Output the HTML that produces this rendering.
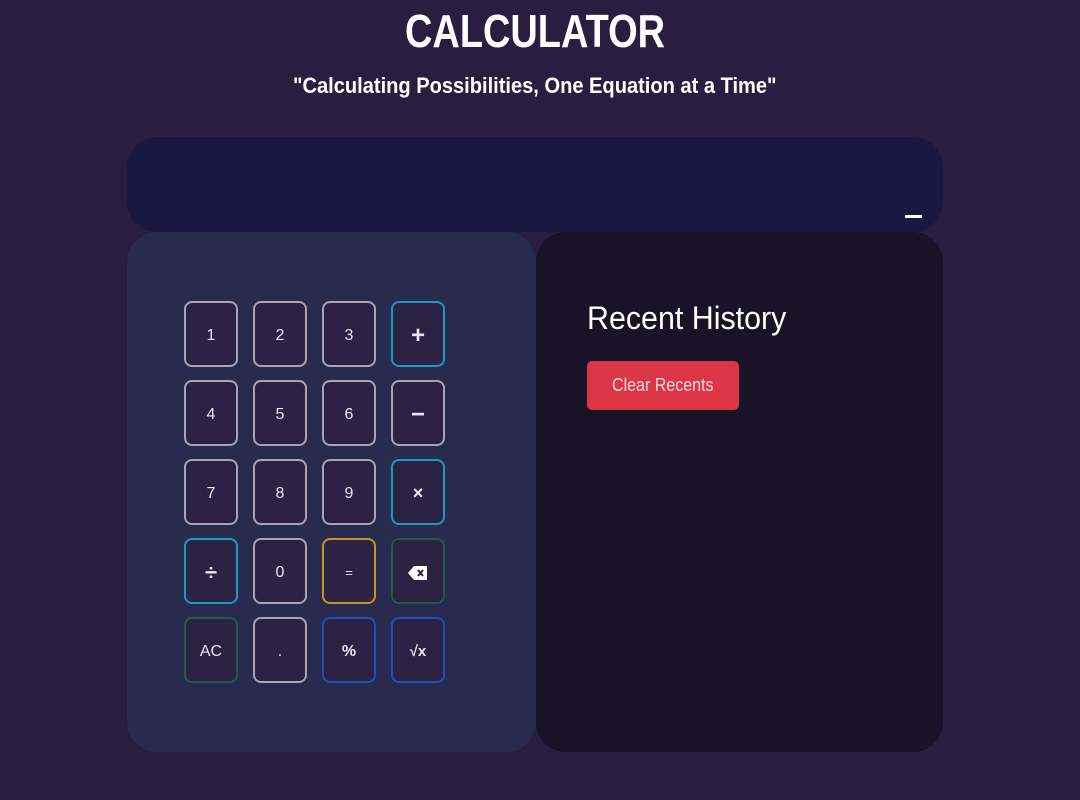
<!DOCTYPE html>
<html><head><meta charset="utf-8"><style>
*{margin:0;padding:0;box-sizing:border-box}
body{width:1080px;height:800px;background:#2a1e40;font-family:"Liberation Sans",sans-serif;color:#fff;position:relative;overflow:hidden}
.t{position:absolute;white-space:nowrap;transform-origin:left top}
.disp{position:absolute;left:127px;top:137px;width:816px;height:95px;background:#1a1740;border-radius:30px}
.cur{position:absolute;left:905px;top:215px;width:17px;height:3px;background:#fff}
.lp{position:absolute;left:127px;top:232px;width:409px;height:520px;background:#282a4e;border-radius:30px}
.rp{position:absolute;left:536px;top:232px;width:407px;height:520px;background:#181326;border-radius:30px}
.b{position:absolute;width:54px;height:66px;border:2px solid #a9a3b4;border-radius:8px;background:#2c2244;display:flex;align-items:center;justify-content:center;font-size:16px;color:#e8e6ee;padding-top:3px}
.c{border-color:#1a9ac0}.g{border-color:#c8961e}.gr{border-color:#1f5e46}.bl{border-color:#1f4fb8}
.clr{position:absolute;left:587px;top:361px;width:152px;height:49px;background:#dc3545;border-radius:5px}
</style></head><body>
<div class="t" style="left:405px;top:4px;font-size:46px;font-weight:bold;transform:scaleX(0.825)">CALCULATOR</div>
<div class="t" style="left:293px;top:73px;font-size:22px;font-weight:bold;transform:scaleX(0.912)">"Calculating Possibilities, One Equation at a Time"</div>
<div class="disp"></div><div class="cur"></div>
<div class="lp"></div><div class="rp"></div>
<div class="b" style="left:184px;top:301px">1</div>
<div class="b" style="left:253px;top:301px">2</div>
<div class="b" style="left:322px;top:301px">3</div>
<div class="b c" style="left:391px;top:301px;font-size:24px;font-weight:bold">+</div>
<div class="b" style="left:184px;top:380px">4</div>
<div class="b" style="left:253px;top:380px">5</div>
<div class="b" style="left:322px;top:380px">6</div>
<div class="b" style="left:391px;top:380px;font-size:24px;font-weight:bold">−</div>
<div class="b" style="left:184px;top:459px">7</div>
<div class="b" style="left:253px;top:459px">8</div>
<div class="b" style="left:322px;top:459px">9</div>
<div class="b c" style="left:391px;top:459px;font-size:18px;font-weight:bold">×</div>
<div class="b c" style="left:184px;top:538px;font-size:22px;font-weight:bold">÷</div>
<div class="b" style="left:253px;top:538px">0</div>
<div class="b g" style="left:322px;top:538px;font-size:13px">=</div>
<div class="b gr" style="left:391px;top:538px"><svg width="20" height="14" viewBox="0 0 20 14"><path d="M6 0H19V14H6L0 7Z" fill="#fff"/><path d="M10 4L15 10M15 4L10 10" stroke="#2c2244" stroke-width="2"/></svg></div>
<div class="b gr" style="left:184px;top:617px">AC</div>
<div class="b" style="left:253px;top:617px">.</div>
<div class="b bl" style="left:322px;top:617px;font-weight:bold">%</div>
<div class="b bl" style="left:391px;top:617px;font-weight:bold;font-size:15px">√x</div>
<div class="t" style="left:587px;top:300px;font-size:32px;transform:scaleX(0.95)">Recent History</div>
<div class="clr"></div>
<div class="t" style="left:612px;top:375px;font-size:18px;color:#f5dce0;transform:scaleX(0.89)">Clear Recents</div>
</body></html>
